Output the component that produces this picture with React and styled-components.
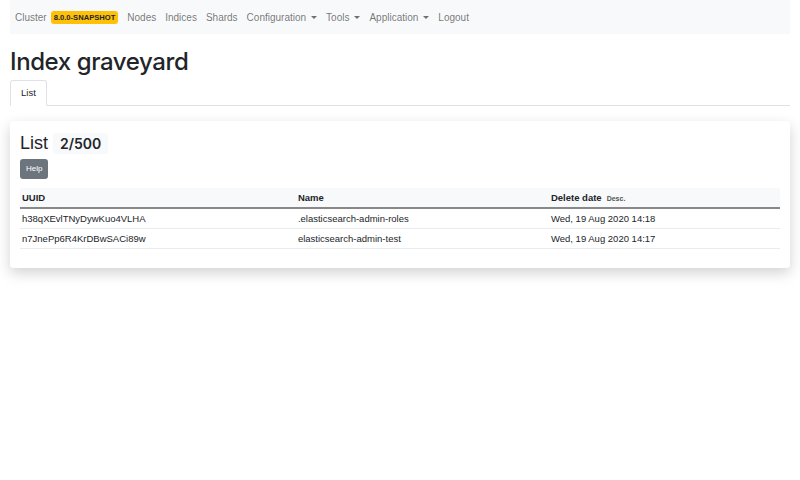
import React from 'react';
import styled, { createGlobalStyle } from 'styled-components';

const LIGHT = '#f8f9fa';
const TEXT = '#212529';
const MUTED = 'rgba(0, 0, 0, 0.55)';
const SANS = '"Liberation Sans", Arial, sans-serif';

const GlobalStyle = createGlobalStyle`
  body {
    margin: 0;
    background: #fff;
    font-family: Inter, "Liberation Sans", Arial, sans-serif;
    color: ${TEXT};
  }
`;

const Page = styled.div`
  padding: 0 10px 40px;
`;

const Navbar = styled.nav`
  display: flex;
  align-items: center;
  gap: 9px;
  height: 34px;
  padding: 0 5px;
  background: ${LIGHT};
  font-family: ${SANS};
  font-size: 10px;
  color: ${MUTED};
`;

const NavItem = styled.span`
  display: inline-flex;
  align-items: center;
  gap: 4px;
`;

const Caret = styled.span`
  width: 0;
  height: 0;
  margin-left: 1px;
  border-left: 3px solid transparent;
  border-right: 3px solid transparent;
  border-top: 3px solid ${MUTED};
`;

const VersionBadge = styled.span`
  background: #ffc107;
  color: ${TEXT};
  font-size: 7.6px;
  font-weight: 700;
  padding: 2px 3px;
  border-radius: 3px;
`;

const Title = styled.h1`
  margin: 14px 0 4px;
  font-size: 24px;
  font-weight: 500;
  letter-spacing: -0.4px;
  line-height: 28px;
`;

const Tabs = styled.div`
  display: flex;
  border-bottom: 1px solid #dee2e6;
`;

const Tab = styled.div`
  padding: 6px 10px 7px;
  font-family: ${SANS};
  font-size: 9.5px;
  border: 1px solid #dee2e6;
  border-bottom-color: #fff;
  border-radius: 3px 3px 0 0;
  margin-bottom: -1px;
  background: #fff;
`;

const Card = styled.div`
  margin-top: 15px;
  padding: 10px 10px 19px;
  background: #fff;
  border-radius: 3px;
  box-shadow: 0 5px 14px rgba(0, 0, 0, 0.18);
`;

const CardHeader = styled.div`
  display: flex;
  align-items: center;
  gap: 5px;
  height: 24px;
`;

const CardTitle = styled.h2`
  margin: 0;
  font-family: ${SANS};
  font-size: 18px;
  font-weight: 400;
`;

const CountBadge = styled.span`
  background: ${LIGHT};
  font-size: 14px;
  font-weight: 600;
  padding: 2px 7px;
  border-radius: 3px;
`;

const HelpButton = styled.button`
  margin-top: 2px;
  height: 20px;
  padding: 0 6px;
  font-family: ${SANS};
  font-size: 8px;
  color: #fff;
  background: #6c757d;
  border: none;
  border-radius: 3px;
`;

const Table = styled.table`
  width: 100%;
  margin-top: 9px;
  border-collapse: collapse;
  font-family: ${SANS};
  font-size: 9.5px;
`;

const Th = styled.th`
  text-align: left;
  font-weight: 700;
  height: 19px;
  padding: 0 2px;
  background: ${LIGHT};
  border-bottom: 2px solid #888;
  width: ${({ w }) => w || 'auto'};
`;

const Td = styled.td`
  height: 19px;
  padding: 0 2px;
  border-bottom: 1px solid #e9ecef;
`;

const Sort = styled.span`
  margin-left: 5px;
  font-size: 7px;
  font-weight: 600;
  color: #555;
`;

const rows = [
  ['h38qXEvlTNyDywKuo4VLHA', '.elasticsearch-admin-roles', 'Wed, 19 Aug 2020 14:18'],
  ['n7JnePp6R4KrDBwSACi89w', 'elasticsearch-admin-test', 'Wed, 19 Aug 2020 14:17'],
];

const App = () => (
  <Page>
    <GlobalStyle />
    <Navbar>
      <NavItem>
        Cluster<VersionBadge>8.0.0-SNAPSHOT</VersionBadge>
      </NavItem>
      <NavItem>Nodes</NavItem>
      <NavItem>Indices</NavItem>
      <NavItem>Shards</NavItem>
      <NavItem>Configuration<Caret /></NavItem>
      <NavItem>Tools<Caret /></NavItem>
      <NavItem>Application<Caret /></NavItem>
      <NavItem>Logout</NavItem>
    </Navbar>
    <Title>Index graveyard</Title>
    <Tabs>
      <Tab>List</Tab>
    </Tabs>
    <Card>
      <CardHeader>
        <CardTitle>List</CardTitle>
        <CountBadge>2/500</CountBadge>
      </CardHeader>
      <HelpButton>Help</HelpButton>
      <Table>
        <thead>
          <tr>
            <Th w="36.3%">UUID</Th>
            <Th w="33.3%">Name</Th>
            <Th>
              Delete date<Sort>Desc.</Sort>
            </Th>
          </tr>
        </thead>
        <tbody>
          {rows.map(([uuid, name, date]) => (
            <tr key={uuid}>
              <Td>{uuid}</Td>
              <Td>{name}</Td>
              <Td>{date}</Td>
            </tr>
          ))}
        </tbody>
      </Table>
    </Card>
  </Page>
);

export default App;
